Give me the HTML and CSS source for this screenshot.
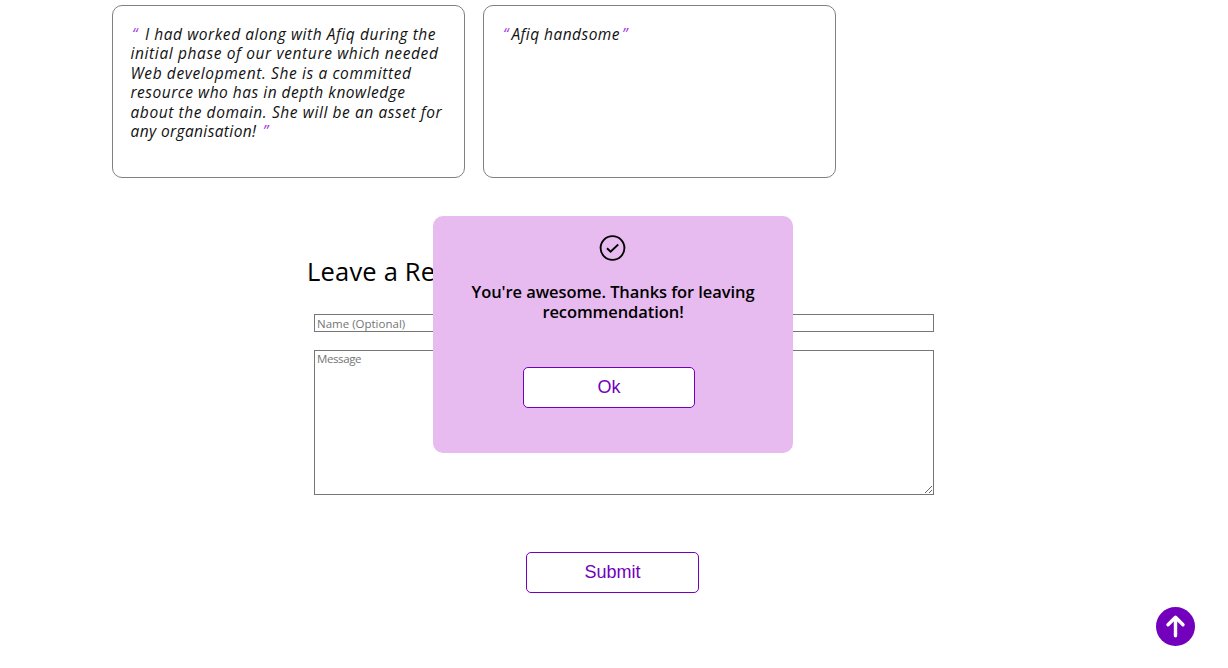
FILE: index.html
```html
<!DOCTYPE html>
<html lang="en">
<head>
<meta charset="utf-8">
<title>Recommendations</title>
<link rel="stylesheet" href="styles.css">
</head>
<body>
<main class="page">
  <section class="cards">
    <p class="card"><span class="quote open">“</span><span class="l1"> I had worked along with Afiq during the</span><br><span class="l2">initial phase of our venture which needed</span><br><span class="l3">Web development. She is a committed</span><br><span class="l4">resource who has in depth knowledge</span><br><span class="l5">about the domain. She will be an asset for</span><br><span class="l6">any organisation! </span><span class="quote">”</span></p>
    <p class="card"><span class="quote open">“</span><span class="l7">Afiq handsome</span><span class="quote">”</span></p>
  </section>
  <form class="form">
    <h2 class="heading">Leave a Recommendation</h2>
    <input class="field name" type="text" placeholder="Name (Optional)">
    <textarea class="field message" placeholder="Message"></textarea>
    <button class="button submit" type="button">Submit</button>
  </form>
</main>
<div class="popup" role="dialog">
  <svg class="check" viewBox="0 0 26 26"><circle cx="12.5" cy="13" r="11.9"/><path d="M7 13.2l3.6 3.5 7.6-7.2"/></svg>
  <h3 class="thanks">You're awesome. Thanks for leaving<br>recommendation!</h3>
  <button class="button ok" type="button">Ok</button>
</div>
<a class="to-top" aria-label="Back to top"><svg viewBox="0 0 39 39"><circle cx="19.5" cy="19.5" r="19.5"/><path d="M19.5 28.7V10.5M12 17.7l7.5-7.5 7.5 7.5"/></svg></a>
</body>
</html>
```
FILE: styles.css
```css
* { box-sizing: border-box; }
body { margin: 0; height: 668px; overflow: hidden; background: #fff; color: #000; font-family: "Trebuchet MS", "Open Sans", sans-serif; }
.page { padding: 5px 0 0 112px; }
.cards { display: flex; gap: 18px; }
.card { width: 353px; height: 173px; margin: 0; padding: 19px 17px 0 17.5px; border: 1px solid #808080; border-radius: 10px; color: #111; font-size: 15.5px; font-style: italic; line-height: 19.4px; white-space: nowrap; }
.quote { color: #a63ee2; padding-left: 2px; }
.open { padding-left: 1.5px; padding-right: 3px; }
.l1 { letter-spacing: 0.55px; }
.l2 { letter-spacing: 0.62px; }
.l3 { letter-spacing: 0.61px; }
.l4 { letter-spacing: 0.5px; }
.l5 { letter-spacing: 0.58px; }
.l6 { letter-spacing: 0.38px; }
.l7 { letter-spacing: 0.46px; }
.form { width: 620px; margin: 75px 0 0 202px; display: flex; flex-direction: column; }
.heading { margin: 0 0 0 -7px; height: 61px; font-size: 25.5px; font-weight: 400; line-height: 36px; letter-spacing: 0.2px; }
.field { display: block; width: 620px; margin: 0; padding: 1px 2px; border: 1px solid #767676; border-radius: 0; background: #fff; font-family: inherit; font-size: 11.5px; line-height: 14px; }
.field::placeholder { color: #757575; }
.name { height: 18px; }
.message { height: 145px; margin-top: 18px; letter-spacing: -0.4px; }
.button { display: block; padding: 0; border: 1px solid #7300bd; border-radius: 5px; background: #fff; color: #7300bd; font: 18px "Liberation Sans", Arial, sans-serif; }
.submit { width: 173px; height: 41px; margin: 57px 0 0 212px; }
.popup { position: absolute; left: 433px; top: 216px; width: 360px; height: 237px; padding-top: 19px; border-radius: 10px; background: #e8bbf0; }
.check { display: block; width: 26px; height: 26px; margin: 0 auto; overflow: visible; fill: none; stroke: #000; stroke-width: 1.9; }
.thanks { margin: 21px 0 0; text-align: center; font-size: 16.5px; font-weight: 600; line-height: 20px; letter-spacing: -0.08px; white-space: nowrap; }
.ok { width: 172px; height: 41px; margin: 45px 0 0 90px; }
.to-top { position: absolute; left: 1156px; top: 607px; width: 39px; height: 39px; }
.to-top svg { display: block; fill: #7300bd; }
.to-top path { fill: none; stroke: #fff; stroke-width: 3.4; stroke-linecap: round; stroke-linejoin: round; }
```
